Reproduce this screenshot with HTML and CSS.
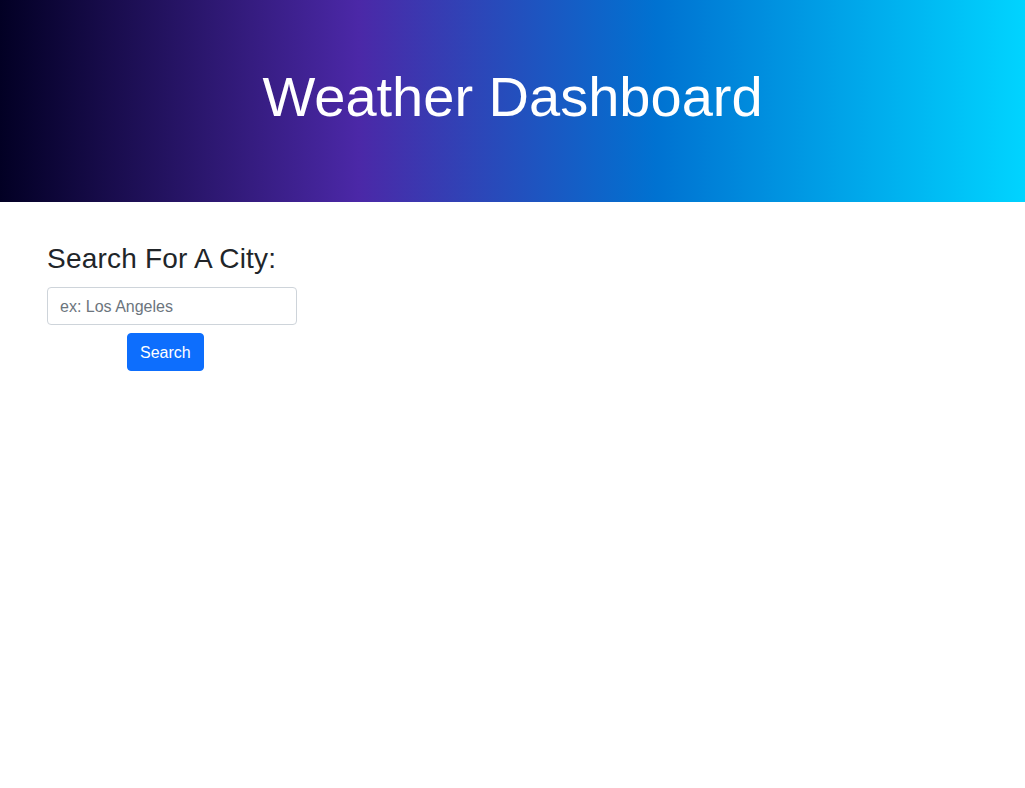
FILE: index.html
```html
<!DOCTYPE html>
<html lang="en">
<head>
<meta charset="utf-8">
<title>Weather Dashboard</title>
<link rel="stylesheet" href="styles.css">
</head>
<body>
<header class="hero">
  <h1 class="hero-title">Weather Dashboard</h1>
</header>
<main class="content">
  <section class="search">
    <h3 class="search-title">Search For A City:</h3>
    <input class="search-input" type="text" placeholder="ex: Los Angeles">
    <button class="search-btn" type="button">Search</button>
  </section>
</main>
</body>
</html>
```
FILE: styles.css
```css
* { box-sizing: border-box; }
html, body { margin: 0; padding: 0; }
body {
  font-family: "Liberation Sans", Arial, Helvetica, sans-serif;
  color: #212529;
  background: #fff;
  font-size: 16px;
}
.hero {
  height: 202px;
  padding-top: 63px;
  background: linear-gradient(90deg, #020024 0%, #4b28a7 35%, #0072d1 64%, #00d4ff 100%);
  text-align: center;
}
.hero-title {
  margin: 0;
  color: #fff;
  font-weight: 400;
  font-size: 56px;
  line-height: 1.2;
}
.content {
  padding: 40px 0 0 47px;
}
.search {
  display: flex;
  flex-direction: column;
  align-items: flex-start;
  width: 250px;
}
.search-title {
  margin: 0 0 11px;
  font-size: 28px;
  font-weight: 400;
  line-height: 1.2;
  letter-spacing: 0.2px;
  white-space: nowrap;
}
.search-input {
  width: 250px;
  height: 38px;
  padding: 7px 12px 5px;
  border: 1px solid #ced4da;
  border-radius: 4px;
  font-family: inherit;
  font-size: 16px;
  color: #212529;
}
.search-input::placeholder { color: #6c757d; }
.search-btn {
  margin: 8px 0 0 80px;
  height: 38px;
  padding: 7px 12px 5px;
  border: 1px solid #0d6efd;
  border-radius: 4px;
  background: #0d6efd;
  color: #fff;
  font-family: inherit;
  font-size: 16px;
}
```
